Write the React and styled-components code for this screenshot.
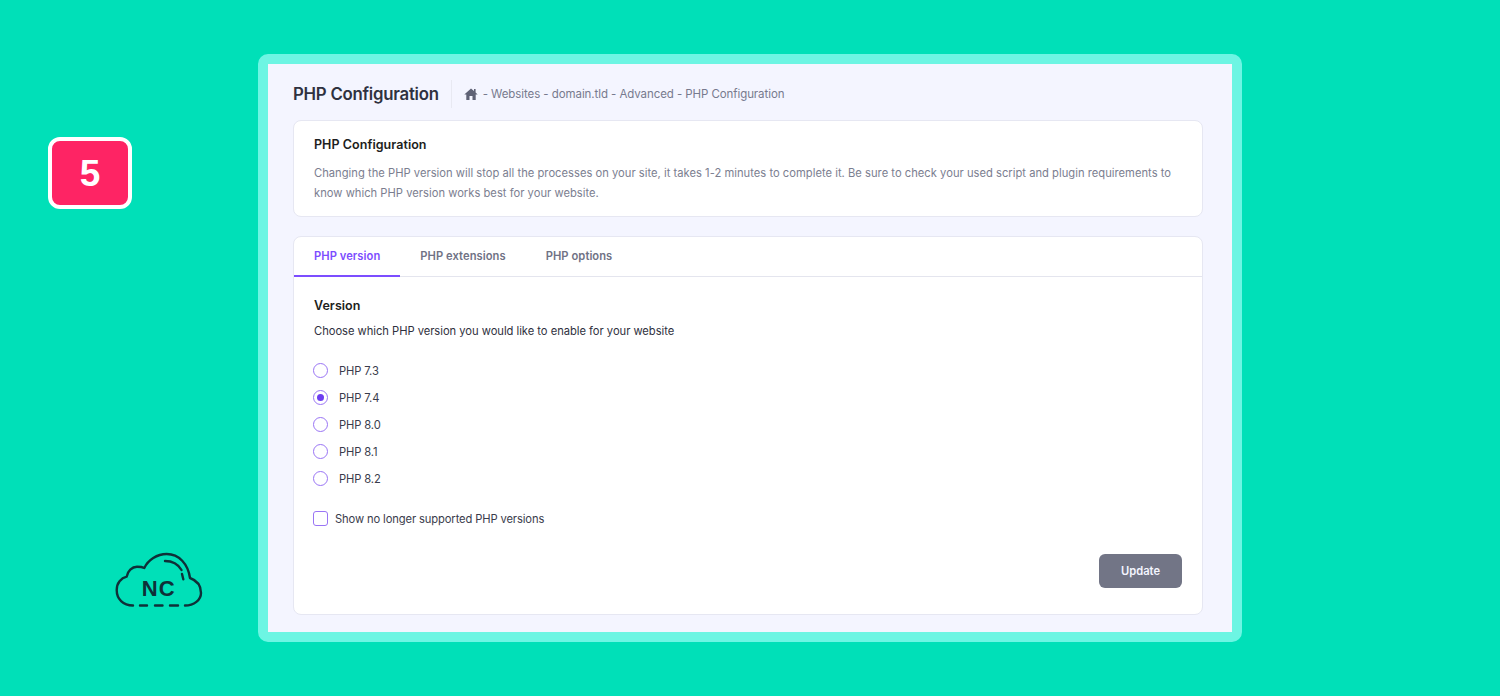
import React from 'react';
import styled, { createGlobalStyle } from 'styled-components';

const Global = createGlobalStyle`
  html, body { margin: 0; padding: 0; background: #00e0b8; }
  * { box-sizing: border-box; }
  body { font-family: "Inter", "Liberation Sans", sans-serif; }
`;

const Page = styled.div`
  width: 1500px; height: 696px; background: #00e0b8; display: flex; padding: 54px 0 54px 48px; overflow: hidden;
`;
const Side = styled.aside`
  width: 210px; display: flex; flex-direction: column; align-items: flex-start;
`;
const Badge = styled.div`
  margin-top: 83px; width: 84px; height: 72px; background: #fe2464; border: 4px solid #fff; border-radius: 12px;
  display: flex; align-items: center; justify-content: center;
  color: #fff; font: 700 37px/1 "Liberation Sans", sans-serif;
`;
const Logo = styled.svg`
  margin-top: auto; margin-left: 66px; margin-bottom: 34px; width: 90px; height: 56px; display: block;
`;
const Frame = styled.main`
  width: 984px; height: 588px; border: 10px solid #6df5e3; border-radius: 10px; background: #f4f5ff;
  padding: 0 29px 0 25px; display: flex; flex-direction: column;
`;
const Header = styled.header`
  height: 56px; display: flex; align-items: center; padding-top: 4px;
`;
const Title = styled.h1`
  margin: 0; font-size: 16.8px; font-weight: 600; color: #2f3140; letter-spacing: -0.25px; padding-right: 12px; border-right: 1px solid #e8e9f2; line-height: 28px;
`;
const Crumbs = styled.nav`
  display: flex; align-items: center; gap: 5px; margin-left: 12px; font-size: 11.5px; color: #777a8e; letter-spacing: -0.08px;
`;
const Card = styled.section`
  background: #fff; border: 1px solid #e6e7f2; border-radius: 8px;
`;
const Intro = styled(Card)`
  height: 97px; padding: 15px 20px; margin-bottom: 19px;
`;
const CardTitle = styled.h2`
  margin: 0 0 9px; font-size: 12.5px; line-height: 18px; font-weight: 600; color: #1d1e20; letter-spacing: 0.05px;
`;
const Desc = styled.p`
  margin: 0; font-size: 11.2px; line-height: 20px; color: #7b7e90; white-space: nowrap; letter-spacing: 0.015px;
`;
const TabsCard = styled(Card)`
  height: 379px; display: flex; flex-direction: column;
`;
const Tabs = styled.div`
  display: flex; height: 40px; border-bottom: 1px solid #e4e5ee; flex: none;
`;
const Tab = styled.div`
  padding: 0 20px 3px; display: flex; align-items: center; font-size: 11.2px; font-weight: 600; letter-spacing: 0.05px;
  color: ${p => (p.$active ? '#7c4dff' : '#6f7285')};
  box-shadow: ${p => (p.$active ? 'inset 0 -2px 0 #7c4dff' : 'none')};
  height: 40px;
`;
const Body = styled.div`
  flex: 1; padding: 20px 20px 26px; display: flex; flex-direction: column;
`;
const Sub = styled.h3`
  margin: 0 0 7px; font-size: 12.5px; line-height: 18px; font-weight: 600; color: #1d1e20; letter-spacing: 0.05px;
`;
const Help = styled.p`
  margin: 0 0 20.5px; font-size: 11.2px; line-height: 18px; color: #2f3140; letter-spacing: -0.03px;
`;
const Radios = styled.div`
  display: flex; flex-direction: column; gap: 7px; margin-bottom: 20px;
`;
const Row = styled.label`
  display: flex; align-items: center; height: 20px; font-size: 11.2px; color: #3a3c4c; letter-spacing: -0.12px;
`;
const Radio = styled.span`
  width: 15px; height: 15px; border-radius: 50%; border: 1.4px solid #9a75f5; margin: 0 11px 0 -1px; display: flex; align-items: center; justify-content: center; background: #fff;
  &::after { content: ""; width: 7px; height: 7px; border-radius: 50%; background: ${p => (p.$on ? '#6d3df0' : 'transparent')}; }
`;
const Check = styled.span`
  width: 15px; height: 15px; border-radius: 3px; border: 1.4px solid #9a75f5; margin: 0 7px 0 -1px;
`;
const Footer = styled.div`
  margin-top: auto; display: flex; justify-content: flex-end;
`;
const Update = styled.button`
  width: 83px; height: 34px; border: 0; border-radius: 6px; background: #727586; color: #f4f5ff; font: 600 11.2px "Inter", sans-serif;
`;

const versions = ['7.3', '7.4', '8.0', '8.1', '8.2'];

export default function App() {
  return (
    <Page>
      <Global />
      <Side>
        <Badge>5</Badge>
        <Logo viewBox="0 0 90 56" fill="none" stroke="#0f3038" strokeWidth="2.4" strokeLinecap="round" strokeLinejoin="round">
          <path d="M19 53.500 C9 53.500 2.700 47 2.700 38 C2.700 31 7 26 12.700 24.700 C13.500 19 18 14.700 23 14.700 C26 14.700 28.500 15 30.300 16 C34 8 43 2 52.700 2 C65 2 74 12 76 26 C83 28.500 87 34 87 41 C87 48 80 53.500 71 53.500" />
          <path d="M26 53.500h7M41 53.500h7.500M56 53.500h8" />
          <path d="M51 9 C58 9 64 12 67.500 18" />
          <path d="M68 22 L69.300 27.300" />
          <text x="44.800" y="44" textAnchor="middle" fontFamily="Liberation Sans" fontWeight="700" fontSize="22" letterSpacing="1.2" fill="#0f3038" stroke="none">NC</text>
        </Logo>
      </Side>
      <Frame>
        <Header>
          <Title>PHP Configuration</Title>
          <Crumbs>
            <svg width="14" height="12" viewBox="0 0 14 12"><path d="M7 .5 .3 6.500h2V12h3.200V8h3v4h3.200V6.500h2L11.600 4.400V1H10v1.900z" fill="#5f6275" /></svg>
            <span>- Websites - domain.tld - Advanced - PHP Configuration</span>
          </Crumbs>
        </Header>
        <Intro>
          <CardTitle>PHP Configuration</CardTitle>
          <Desc>
            Changing the PHP version will stop all the processes on your site, it takes 1-2 minutes to complete it. Be sure to check your used script and plugin requirements to<br />
            know which PHP version works best for your website.
          </Desc>
        </Intro>
        <TabsCard>
          <Tabs>
            <Tab $active>PHP version</Tab>
            <Tab>PHP extensions</Tab>
            <Tab>PHP options</Tab>
          </Tabs>
          <Body>
            <Sub>Version</Sub>
            <Help>Choose which PHP version you would like to enable for your website</Help>
            <Radios>
              {versions.map(v => (
                <Row key={v}><Radio $on={v === '7.4'} />PHP {v}</Row>
              ))}
            </Radios>
            <Row><Check />Show no longer supported PHP versions</Row>
            <Footer><Update>Update</Update></Footer>
          </Body>
        </TabsCard>
      </Frame>
    </Page>
  );
}
